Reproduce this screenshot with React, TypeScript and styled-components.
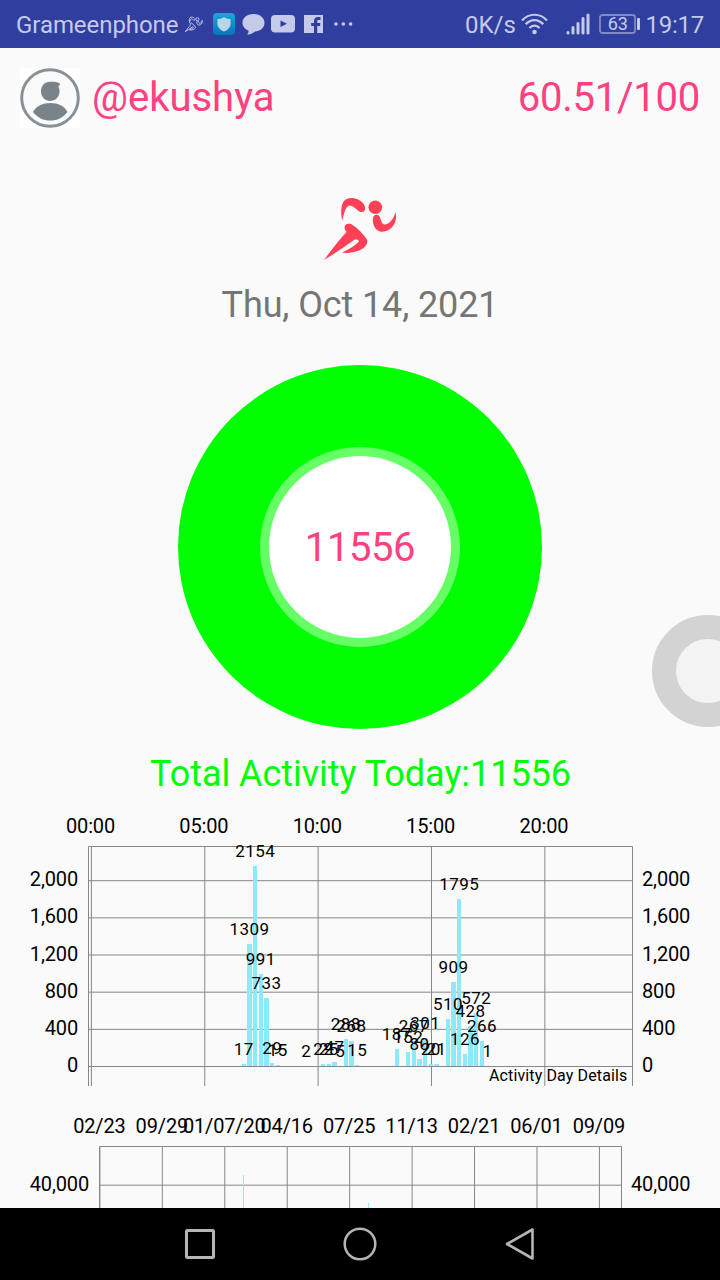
import React from "react";
import styled, { createGlobalStyle } from "styled-components";

const GlobalStyle = createGlobalStyle`
  * { box-sizing: border-box; }
  body { margin: 0; background: #fafafa; font-family: Roboto, sans-serif; }
`;

const Screen = styled.div`
  position: relative;
  width: 720px;
  height: 1280px;
  overflow: hidden;
  display: flex;
  flex-direction: column;
  background: #fafafa;
`;

const StatusBar = styled.header`
  flex: none;
  height: 48px;
  padding: 0 16px;
  display: flex;
  align-items: center;
  justify-content: space-between;
  background: #303f9f;
  color: #c5cae9;
`;

const StatusGroup = styled.div`
  display: flex;
  align-items: center;
  height: 48px;
`;

const StatusText = styled.span<{ $spacing?: number }>`
  font-size: 24px;
  line-height: 48px;
  padding-top: 1px;
  white-space: nowrap;
  letter-spacing: ${(p) => p.$spacing ?? 0}px;
`;

const StatusIcon = styled.svg<{ $left: number }>`
  display: block;
  flex: none;
  margin-left: ${(p) => p.$left}px;
`;

const Content = styled.main`
  flex: 1;
  min-height: 0;
  overflow: hidden;
  display: flex;
  flex-direction: column;
  align-items: center;
`;

const ProfileRow = styled.div`
  flex: none;
  width: 100%;
  height: 100px;
  padding: 0 20px;
  display: flex;
  align-items: center;
  color: #ff4081;
  font-size: 40px;
`;

const Avatar = styled.svg`
  display: block;
  margin-right: 12px;
  background: #fff;
`;

const UserName = styled.span`
  padding-bottom: 1px;
`;

const Score = styled.span`
  margin-left: auto;
  padding-bottom: 1px;
  letter-spacing: -0.25px;
`;

const RunnerLogo = styled.svg`
  flex: none;
  display: block;
  margin-top: 32px;
`;

const DateText = styled.div`
  flex: none;
  height: 48px;
  line-height: 50px;
  font-size: 36px;
  letter-spacing: -0.12px;
  color: #757575;
`;

const StepRing = styled.div`
  flex: none;
  width: 364px;
  height: 364px;
  margin-top: 37px;
  border-radius: 50%;
  background: #00ff00;
  display: flex;
  align-items: center;
  justify-content: center;
`;

const StepCount = styled.div`
  width: 200px;
  height: 200px;
  border: 9px solid #66ff66;
  border-radius: 50%;
  background: #fff;
  display: flex;
  align-items: center;
  justify-content: center;
  color: #ff4081;
  font-size: 40px;
  letter-spacing: -0.4px;
`;

const TotalText = styled.div`
  flex: none;
  height: 48px;
  margin-top: 21px;
  padding-left: 1px;
  line-height: 48px;
  font-size: 36px;
  letter-spacing: -0.05px;
  color: #00ff00;
`;

const Chart = styled.svg`
  flex: none;
  display: block;
  text { font-family: Roboto, sans-serif; fill: #000; }
`;

const AxisLabel = styled.text`
  font-size: 20px;
  letter-spacing: -0.15px;
`;

const BarLabel = styled.text`
  font-size: 17px;
  letter-spacing: 0.45px;
  text-anchor: middle;
`;

const Caption = styled.text`
  font-size: 16px;
  letter-spacing: 0.13px;
  text-anchor: end;
`;

const TouchBall = styled.div`
  position: absolute;
  left: 652px;
  top: 615px;
  width: 112px;
  height: 112px;
  border: 24px solid #d3d3d3;
  border-radius: 50%;
  background: #f3f3f3;
`;

const NavBar = styled.nav`
  flex: none;
  height: 72px;
  background: #000;
  display: flex;
  align-items: center;
  justify-content: center;
  gap: 120px;
`;

const NavIcon = styled.svg`
  display: block;
  fill: none;
  stroke: #b5b5b5;
  stroke-width: 3;
  stroke-linejoin: round;
`;

const RunnerShape = () => (
  <>
    <path d="M18.2 23C16.5 14 17 7 20 3C23 0 27 -0.2 30 0.3C36 1.5 40 5 41 9C42 13 38.5 15.5 35 13.2C31 10 28 7 25 7.5C21.5 9 20 15 18.2 23Z" />
    <circle cx="51.3" cy="9.3" r="6.8" />
    <path d="M49 20C50 16 54 16 56 19C57 23 58 26.5 61 26.5C66 26 70 20 71.5 14C73.5 22 70 29 64 32.3C59 35 52.5 34 50 28C49 25 48.5 23 49 20Z" />
    <path d="M0 62C8 51 16 41 22.5 34C18 28 22 24.5 27 26C34 30 39 36 43 41.5C44.5 46 40 51 35 52.5C30 54.5 23 55.5 18 54.5C25 51 31 48 34.5 44C35.5 42 33 41 30 42C20 49 10 56 0 62Z" />
  </>
);

const dayBars: [number, number][] = [
  [27, 17], [28, 1309], [29, 2154], [30, 991], [31, 733], [32, 29], [33, 15],
  [38, 2], [41, 22], [42, 25], [43, 47], [44, 5], [45, 288], [46, 268], [47, 15],
  [54, 187], [56, 152], [57, 267], [58, 80], [59, 301], [60, 20], [61, 21],
  [63, 510], [64, 909], [65, 1795], [66, 126], [67, 428], [68, 572], [69, 266], [70, 1],
];

const dayTicks = [0, 400, 800, 1200, 1600, 2000];
const hourTicks = ["00:00", "05:00", "10:00", "15:00", "20:00"];
const DAY_ZERO = 268.5;
const slotX = (slot: number) => 91.4 + slot * 5.668;
const stepsY = (steps: number) => DAY_ZERO - steps * 0.0929;

const DayBar = ({ slot, steps }: { slot: number; steps: number }) => {
  const left = Math.floor(slotX(slot) - 2.4);
  const right = Math.floor(slotX(slot) + 1.95);
  const top = Math.floor(stepsY(steps));
  return <rect x={left} y={top} width={right - left} height={268 - top} fill="#8ceaff" />;
};

const DayChart = () => (
  <Chart width="720" height="300" viewBox="0 0 720 300">
    <g stroke="#878787" strokeWidth="1">
      {hourTicks.map((t, i) => (
        <line key={t} x1={slotX(i * 20)} x2={slotX(i * 20)} y1="49" y2="288" />
      ))}
      {dayTicks.map((v) => (
        <line key={v} x1="89" x2="632" y1={stepsY(v)} y2={stepsY(v)} />
      ))}
      <path d="M88.5 288V48.5H632.5V288" fill="none" />
    </g>
    {dayBars.map(([slot, steps]) => (
      <DayBar key={slot} slot={slot} steps={steps} />
    ))}
    {dayBars.map(([slot, steps]) => (
      <BarLabel key={slot} x={slotX(slot) - 0.6} y={Math.floor(stepsY(steps)) - 9}>{steps}</BarLabel>
    ))}
    {hourTicks.map((t, i) => (
      <AxisLabel key={t} x={slotX(i * 20) - 0.9} y="35" textAnchor="middle">{t}</AxisLabel>
    ))}
    {dayTicks.map((v) => (
      <g key={v}>
        <AxisLabel x="78" y={Math.round(stepsY(v) + 5.5)} textAnchor="end">{v.toLocaleString("en-US")}</AxisLabel>
        <AxisLabel x="642" y={Math.round(stepsY(v) + 5.5)}>{v.toLocaleString("en-US")}</AxisLabel>
      </g>
    ))}
    <Caption x="627.5" y="283">Activity Day Details</Caption>
  </Chart>
);

const dateTicks = ["02/23", "09/29", "01/07/20", "04/16", "07/25", "11/13", "02/21", "06/01", "09/09"];
const dateX = (i: number) => 99.9 + i * 62.44;

const HistoryChart = () => (
  <Chart width="720" height="110" viewBox="0 0 720 110">
    <g stroke="#878787" strokeWidth="1">
      {dateTicks.map((t, i) => (
        <line key={t} x1={dateX(i)} x2={dateX(i)} y1="49" y2="110" />
      ))}
      <line x1="100" x2="621" y1="87.2" y2="87.2" />
      <path d="M99.5 110V48.5H621.5V110" fill="none" />
    </g>
    <g fill="#8ceaff">
      <rect x="243" y="77" width="1" height="33" />
      <rect x="368" y="105" width="1" height="5" />
    </g>
    {dateTicks.map((t, i) => (
      <AxisLabel key={t} x={dateX(i) - 0.5} y="35" textAnchor="middle">{t}</AxisLabel>
    ))}
    <AxisLabel x="89" y="93" textAnchor="end">40,000</AxisLabel>
    <AxisLabel x="631" y="93">40,000</AxisLabel>
  </Chart>
);

export default function App() {
  return (
    <Screen>
      <GlobalStyle />
      <StatusBar>
        <StatusGroup>
          <StatusText $spacing={-0.06}>Grameenphone</StatusText>
          <StatusIcon $left={7} width="18" height="17" viewBox="-1 -2 76 67" fill="none" stroke="#c5cae9" strokeWidth="4">
            <RunnerShape />
          </StatusIcon>
          <StatusIcon $left={10} width="22" height="22" viewBox="0 0 22 22">
            <defs>
              <linearGradient id="guard" x1="0" y1="0" x2="0" y2="1">
                <stop offset="0" stopColor="#16a9da" />
                <stop offset="1" stopColor="#0c72bd" />
              </linearGradient>
            </defs>
            <rect width="22" height="22" rx="4" fill="url(#guard)" />
            <path d="M11 4C13 5.5 15 6 17.5 6V11C17.5 14.5 14.5 17 11 18.5C7.5 17 4.5 14.5 4.5 11V6C7 6 9 5.5 11 4Z" fill="#b9d6e8" />
          </StatusIcon>
          <StatusIcon $left={7} width="23" height="22" viewBox="0 0 23 22" fill="#c5cae9">
            <path d="M11.5 1C18 1 22.5 4.8 22.5 9.7C22.5 15 18 18 13 18.4C11 20.5 8 21.5 5 21.5C6.3 20.4 6.7 19 6.5 17.5C2.8 16 .5 13.2 .5 9.7C.5 4.8 5 1 11.5 1Z" />
          </StatusIcon>
          <StatusIcon $left={6} width="24" height="18" viewBox="0 0 24 18">
            <rect width="24" height="17.5" rx="4" fill="#c5cae9" />
            <path d="M9.5 5.5V12L16 8.7Z" fill="#303f9f" />
          </StatusIcon>
          <StatusIcon $left={9} width="19" height="18" viewBox="0 0 19 18">
            <rect width="19" height="18" fill="#c5cae9" />
            <path d="M10 18V11H7.2V8H10V6.2C10 3.5 11.5 2 14 2H16.5V5H14.7C13.6 5 13.2 5.5 13.2 6.4V8H16.4L16 11H13.2V18Z" fill="#303f9f" />
          </StatusIcon>
          <StatusIcon $left={11} width="19" height="4" viewBox="0 0 19 4" fill="#c5cae9">
            <circle cx="2" cy="2" r="1.8" />
            <circle cx="9.3" cy="2" r="1.8" />
            <circle cx="16.6" cy="2" r="1.8" />
          </StatusIcon>
        </StatusGroup>
        <StatusGroup>
          <StatusText>0K/s</StatusText>
          <StatusIcon $left={5} width="27" height="22" viewBox="0 0 27 22" fill="none" stroke="#c5cae9" strokeWidth="2.2">
            <path d="M1 7.5C8-.2 19-.2 26 7.5" />
            <path d="M4.7 11.3C9.8 5.7 17.2 5.7 22.3 11.3" />
            <path d="M8.4 15C11.3 11.8 15.7 11.8 18.6 15" />
            <circle cx="13.5" cy="19" r="2.3" fill="#c5cae9" stroke="none" />
          </StatusIcon>
          <StatusIcon $left={18} width="24" height="22" viewBox="0 0 24 22" stroke="#c5cae9" strokeWidth="3" strokeLinecap="round">
            <path d="M2 19.5V20M7 14.5V20M12 10.5V20M17 5.5V20M22 2V20" />
          </StatusIcon>
          <StatusIcon $left={9} width="41" height="20" viewBox="0 0 41 20">
            <rect x="1" y="1" width="35" height="18" rx="2.5" fill="none" stroke="#8189c5" strokeWidth="1.8" />
            <rect x="38" y="4" width="3" height="12" rx="1" fill="#c5cae9" />
            <text x="18.8" y="16.3" fontFamily="Roboto, sans-serif" fontSize="18" fill="#c5cae9" textAnchor="middle">63</text>
          </StatusIcon>
          <StatusText $spacing={-0.25}>&nbsp;19:17</StatusText>
        </StatusGroup>
      </StatusBar>

      <Content>
        <ProfileRow>
          <Avatar width="60" height="60" viewBox="0 0 60 60">
            <circle cx="30" cy="30" r="28.3" fill="#fafafa" stroke="#879197" strokeWidth="3" />
            <path d="M40 15.5C36 13.5 33 13.8 30 13.8C24.5 13.8 21 18 21 23.5C21 28.8 25 33 30.2 33C35.5 33 39.5 28.8 39.5 23.5C39.5 21 39 19.5 38.3 18.5C39.2 17.8 40 17 40 15.5Z" fill="#79838a" />
            <path d="M13 44C16 38 23 35 30.3 35C38 35 44.5 38 47.5 44C43 50 37 52.5 30.3 52.5C23.5 52.5 17.5 50 13 44Z" fill="#79838a" />
          </Avatar>
          <UserName>@ekushya</UserName>
          <Score>60.51/100</Score>
        </ProfileRow>
        <RunnerLogo width="74" height="100" viewBox="-1 -18 74 100" fill="#ff4057">
          <RunnerShape />
        </RunnerLogo>
        <DateText>Thu, Oct 14, 2021</DateText>
        <StepRing>
          <StepCount>11556</StepCount>
        </StepRing>
        <TotalText>Total Activity Today:11556</TotalText>
        <DayChart />
        <HistoryChart />
      </Content>

      <NavBar>
        <NavIcon width="40" height="40" viewBox="0 0 40 40">
          <rect x="6.5" y="6.5" width="27" height="27" rx="1" />
        </NavIcon>
        <NavIcon width="40" height="40" viewBox="0 0 40 40">
          <circle cx="20" cy="20" r="15.3" strokeWidth="2.5" />
        </NavIcon>
        <NavIcon width="40" height="40" viewBox="0 0 40 40">
          <path d="M7 20L32.5 5.5V34.5Z" strokeWidth="2.6" />
        </NavIcon>
      </NavBar>
      <TouchBall />
    </Screen>
  );
}
